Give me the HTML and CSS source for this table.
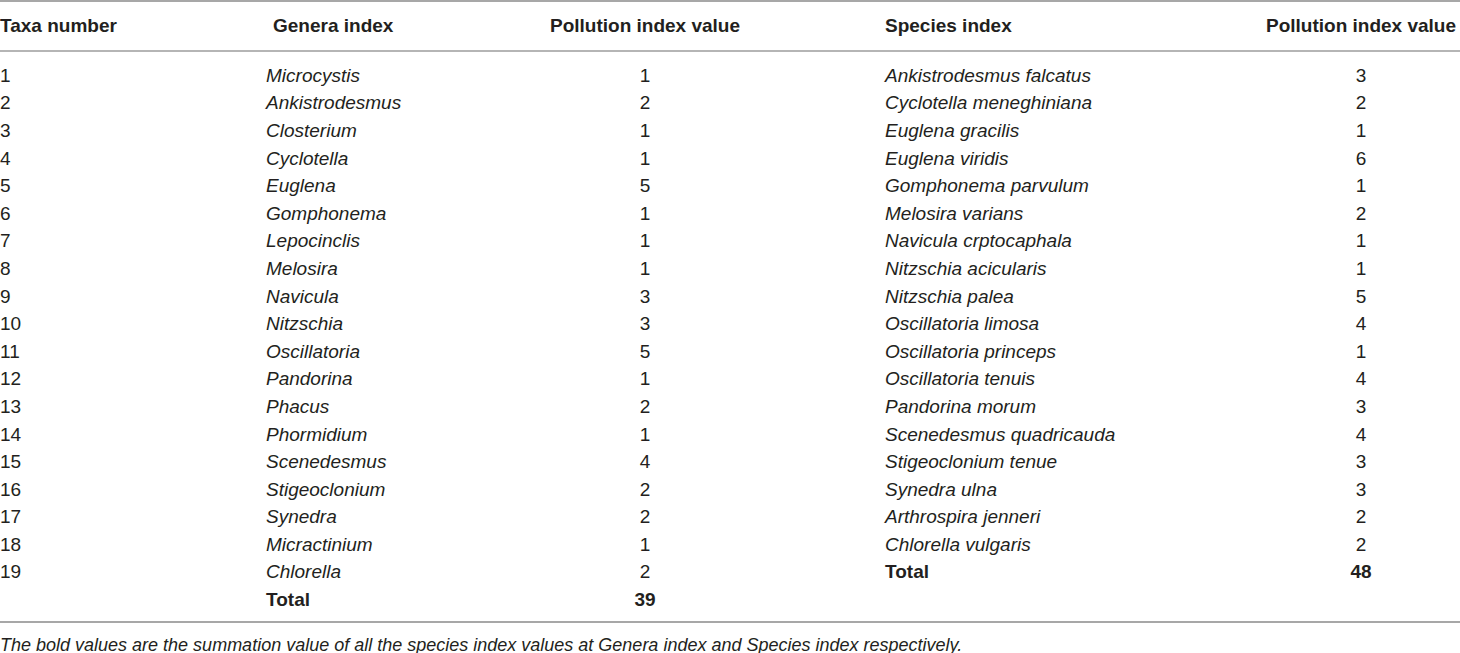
FILE: index.html
```html
<!DOCTYPE html>
<html lang="en">
<head>
  <meta charset="UTF-8">
  <title>Pollution index values</title>
  <link rel="stylesheet" href="styles.css">
</head>
<body>
  <table class="data-table">
    <colgroup>
      <col class="c-taxa">
      <col class="c-genus">
      <col class="c-gval">
      <col class="c-species">
      <col class="c-sval">
    </colgroup>
    <thead>
      <tr>
        <th class="left">Taxa number</th>
        <th class="left genus-head">Genera index</th>
        <th class="num">Pollution index value</th>
        <th class="left species">Species index</th>
        <th class="num">Pollution index value</th>
      </tr>
    </thead>
    <tbody>
      <tr class="first"><td>1</td><td><i>Microcystis</i></td><td class="num">1</td><td class="species"><i>Ankistrodesmus falcatus</i></td><td class="num">3</td></tr>
      <tr><td>2</td><td><i>Ankistrodesmus</i></td><td class="num">2</td><td class="species"><i>Cyclotella meneghiniana</i></td><td class="num">2</td></tr>
      <tr><td>3</td><td><i>Closterium</i></td><td class="num">1</td><td class="species"><i>Euglena gracilis</i></td><td class="num">1</td></tr>
      <tr><td>4</td><td><i>Cyclotella</i></td><td class="num">1</td><td class="species"><i>Euglena viridis</i></td><td class="num">6</td></tr>
      <tr><td>5</td><td><i>Euglena</i></td><td class="num">5</td><td class="species"><i>Gomphonema parvulum</i></td><td class="num">1</td></tr>
      <tr><td>6</td><td><i>Gomphonema</i></td><td class="num">1</td><td class="species"><i>Melosira varians</i></td><td class="num">2</td></tr>
      <tr><td>7</td><td><i>Lepocinclis</i></td><td class="num">1</td><td class="species"><i>Navicula crptocaphala</i></td><td class="num">1</td></tr>
      <tr><td>8</td><td><i>Melosira</i></td><td class="num">1</td><td class="species"><i>Nitzschia acicularis</i></td><td class="num">1</td></tr>
      <tr><td>9</td><td><i>Navicula</i></td><td class="num">3</td><td class="species"><i>Nitzschia palea</i></td><td class="num">5</td></tr>
      <tr><td>10</td><td><i>Nitzschia</i></td><td class="num">3</td><td class="species"><i>Oscillatoria limosa</i></td><td class="num">4</td></tr>
      <tr><td>11</td><td><i>Oscillatoria</i></td><td class="num">5</td><td class="species"><i>Oscillatoria princeps</i></td><td class="num">1</td></tr>
      <tr><td>12</td><td><i>Pandorina</i></td><td class="num">1</td><td class="species"><i>Oscillatoria tenuis</i></td><td class="num">4</td></tr>
      <tr><td>13</td><td><i>Phacus</i></td><td class="num">2</td><td class="species"><i>Pandorina morum</i></td><td class="num">3</td></tr>
      <tr><td>14</td><td><i>Phormidium</i></td><td class="num">1</td><td class="species"><i>Scenedesmus quadricauda</i></td><td class="num">4</td></tr>
      <tr><td>15</td><td><i>Scenedesmus</i></td><td class="num">4</td><td class="species"><i>Stigeoclonium tenue</i></td><td class="num">3</td></tr>
      <tr><td>16</td><td><i>Stigeoclonium</i></td><td class="num">2</td><td class="species"><i>Synedra ulna</i></td><td class="num">3</td></tr>
      <tr><td>17</td><td><i>Synedra</i></td><td class="num">2</td><td class="species"><i>Arthrospira jenneri</i></td><td class="num">2</td></tr>
      <tr><td>18</td><td><i>Micractinium</i></td><td class="num">1</td><td class="species"><i>Chlorella vulgaris</i></td><td class="num">2</td></tr>
      <tr><td>19</td><td><i>Chlorella</i></td><td class="num">2</td><td class="species"><b>Total</b></td><td class="num"><b>48</b></td></tr>
      <tr class="last"><td></td><td><b>Total</b></td><td class="num"><b>39</b></td><td class="species"></td><td class="num"></td></tr>
    </tbody>
  </table>
  <p class="note">The bold values are the summation value of all the species index values at Genera index and Species index respectively.</p>
</body>
</html>
```

FILE: styles.css
```css
body { margin: 0; background: #fff; color: #231f20; font-family: "Liberation Sans", Arial, sans-serif; }
.data-table { width: 1460px; border-collapse: collapse; table-layout: fixed; border-top: 2px solid #a7a7a7; border-bottom: 2px solid #a7a7a7; font-size: 19px; }
.c-taxa { width: 266px; }
.c-genus { width: 281px; }
.c-gval { width: 196px; }
.c-species { width: 519px; }
.c-sval { width: 198px; }
th, td { padding: 0; white-space: nowrap; line-height: 22px; }
th { height: 48px; font-weight: bold; border-bottom: 2px solid #b5b5b5; }
td { height: 27.6px; }
th.left, td { text-align: left; }
.num, td.num { text-align: center; }
.genus-head { padding-left: 7px; }
.species { padding-left: 142px; }
tr.first td { padding-top: 10px; }
tr.last td { padding-bottom: 7px; }
.note { margin: 12px 0 0; font-size: 18px; line-height: 20px; font-style: italic; }
```
